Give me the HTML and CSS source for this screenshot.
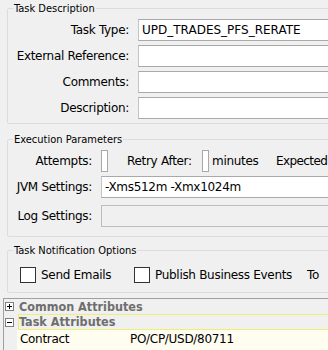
FILE: index.html
```html
<!DOCTYPE html>
<html>
<head>
<meta charset="utf-8">
<title>Task</title>
<link rel="stylesheet" href="styles.css">
</head>
<body>
<div id="app">

	<div class="groups">
		<fieldset class="group group-desc">
			<legend>Task Description</legend>
			<div class="form-grid desc-grid">
				<label>Task Type:</label>
				<div class="field caps">UPD_TRADES_PFS_RERATE</div>
				<label>External Reference:</label>
				<div class="field"></div>
				<label>Comments:</label>
				<div class="field"></div>
				<label>Description:</label>
				<div class="field"></div>
			</div>
		</fieldset>

		<fieldset class="group group-exec">
			<legend>Execution Parameters</legend>
			<div class="form-grid exec-grid">
				<label>Attempts:</label>
				<div class="exec-line">
					<div class="field tiny"></div>
					<span class="retry">Retry After:</span>
					<div class="field tiny"></div>
					<span class="minutes">minutes</span>
					<span class="expected">Expected</span>
				</div>
				<label>JVM Settings:</label>
				<div class="field">-Xms512m -Xmx1024m</div>
				<label class="log-label">Log Settings:</label>
				<div class="field disabled"></div>
			</div>
		</fieldset>

		<fieldset class="group group-notify">
			<legend>Task Notification Options</legend>
			<div class="check-line">
				<span class="check check-mail"><i class="box"></i>Send Emails</span>
				<span class="check check-events"><i class="box"></i>Publish Business Events</span>
				<span class="to">To</span>
			</div>
		</fieldset>
	</div>

	<div class="attr-panel">
		<div class="attr-head">
			<i class="toggle plus"></i>
			<span>Common Attributes</span>
		</div>
		<div class="attr-head selected">
			<i class="toggle minus"></i>
			<span>Task Attributes</span>
		</div>
		<div class="attr-row">
			<span class="attr-name">Contract</span>
			<span class="attr-value">PO/CP/USD/80711</span>
		</div>
	</div>

</div>
</body>
</html>
```

FILE: styles.css
```css
html,
body {
	margin: 0;
	width: 328px;
	height: 350px;
	overflow: hidden;
	background: #f0f0f0;
}
#app {
	width: 440px;
	font-family: 'DejaVu Sans', Tahoma, sans-serif;
	font-size: 12px;
	letter-spacing: -0.3px;
	color: #000;
}
.groups {
	padding: 2px 0 0 7px;
}
.group {
	margin: 0;
	padding: 4px 0 4px 0;
	border: 1px solid #dcdcdc;
	border-radius: 2px;
	min-width: 0;
}
.group legend {
	margin-left: 5px;
	padding: 0 1px;
	font-size: 11px;
	line-height: 13px;
	font-stretch: condensed;
	letter-spacing: 0;
}
.form-grid {
	display: grid;
	column-gap: 9px;
	align-items: center;
}
.form-grid label {
	text-align: right;
	white-space: nowrap;
}
.desc-grid {
	grid-template-columns: 121px 1fr;
	row-gap: 4px;
}
.field {
	box-sizing: border-box;
	height: 22px;
	line-height: 20px;
	padding: 0 3px;
	background: #fff;
	border: 1px solid #a9a9a9;
	border-left-color: #c4c4c4;
	white-space: nowrap;
}
.field.caps {
	letter-spacing: 0;
}
.field.disabled {
	background: #f0f0f0;
	border-color: #bcbcbc;
	margin-top: 3px;
}
.log-label {
	margin-top: 3px;
}

/* execution */
.group-exec {
	margin-top: 9px;
	padding-bottom: 9px;
}
.exec-grid {
	grid-template-columns: 84px 1fr;
	row-gap: 4px;
}
.exec-line {
	display: flex;
	align-items: center;
	height: 22px;
}
.field.tiny {
	width: 7px;
	padding: 0;
	border-color: #a9a9a9;
}
.retry {
	width: 75px;
	margin-left: 19px;
}
.minutes {
	width: 64px;
	margin-left: 3px;
}
.expected {
	letter-spacing: -0.6px;
}

/* notification */
.group-notify {
	margin-top: 7px;
	padding-top: 10px;
	padding-bottom: 9px;
}
.check-line {
	display: flex;
	align-items: center;
	height: 16px;
	padding-left: 12px;
}
.check {
	display: flex;
	align-items: center;
}
.check-mail {
	width: 114px;
}
.check-events {
	width: 173px;
}
.box {
	display: block;
	box-sizing: border-box;
	width: 16px;
	height: 16px;
	margin-right: 5px;
	background: #fff;
	border: 1px solid #333;
}

/* attributes */
.attr-panel {
	margin: 5px 0 0 3px;
	border-top: 1px solid #a0a0a0;
	border-left: 1px solid #a0a0a0;
	height: 60px;
}
.attr-head {
	display: flex;
	align-items: center;
	height: 15px;
	font-weight: bold;
	font-size: 12.5px;
	font-stretch: condensed;
	letter-spacing: 0;
	color: #6e6e6e;
}
.attr-head span {
	box-sizing: border-box;
	flex: 1;
	height: 15px;
	line-height: 15px;
	padding-left: 1px;
}
.attr-head.selected {
	height: 16px;
}
.attr-head.selected span {
	height: 16px;
	border: 1px solid #eded78;
	border-right: 0;
	line-height: 14px;
	padding-left: 0;
}
.toggle {
	position: relative;
	box-sizing: border-box;
	display: block;
	width: 9px;
	height: 9px;
	margin: 0 4px 0 1px;
	border: 1px solid #808080;
	background: #fff;
}
.toggle:before,
.toggle.plus:after {
	content: "";
	position: absolute;
	background: #000;
}
.toggle:before {
	left: 1px;
	top: 3px;
	width: 5px;
	height: 1px;
}
.toggle.plus:after {
	left: 3px;
	top: 1px;
	width: 1px;
	height: 5px;
}
.attr-row {
	display: flex;
	height: 20px;
	line-height: 18px;
	margin-left: 13px;
	padding-left: 3px;
	background: #fffcf0;
}
.attr-name {
	width: 110px;
}
```
